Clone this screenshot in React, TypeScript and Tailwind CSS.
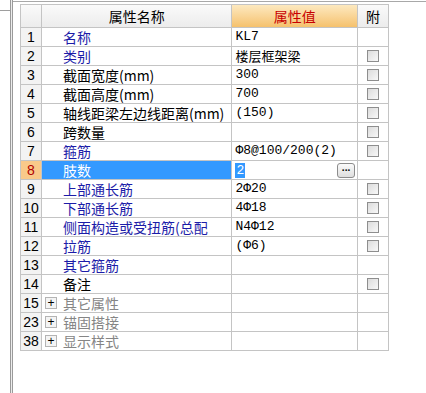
import React from 'react';

type Row = {
    no: string;
    name: string;
    value?: string;
    tone: 'blue' | 'black' | 'group';
    check?: boolean;
    selected?: boolean;
};

const rows: Row[] = [
    { no: '1', name: '名称', value: 'KL7', tone: 'blue' },
    { no: '2', name: '类别', value: '楼层框架梁', tone: 'blue', check: true },
    { no: '3', name: '截面宽度(mm)', value: '300', tone: 'black', check: true },
    { no: '4', name: '截面高度(mm)', value: '700', tone: 'black', check: true },
    { no: '5', name: '轴线距梁左边线距离(mm)', value: '(150)', tone: 'black', check: true },
    { no: '6', name: '跨数量', tone: 'black', check: true },
    { no: '7', name: '箍筋', value: 'Φ8@100/200(2)', tone: 'blue', check: true },
    { no: '8', name: '肢数', value: '2', tone: 'blue', selected: true },
    { no: '9', name: '上部通长筋', value: '2Φ20', tone: 'blue', check: true },
    { no: '10', name: '下部通长筋', value: '4Φ18', tone: 'blue', check: true },
    { no: '11', name: '侧面构造或受扭筋(总配', value: 'N4Φ12', tone: 'blue', check: true },
    { no: '12', name: '拉筋', value: '(Φ6)', tone: 'blue', check: true },
    { no: '13', name: '其它箍筋', tone: 'blue' },
    { no: '14', name: '备注', tone: 'black', check: true },
    { no: '15', name: '其它属性', tone: 'group' },
    { no: '23', name: '锚固搭接', tone: 'group' },
    { no: '38', name: '显示样式', tone: 'group' },
];

const cjk = "font-['Noto_Sans_CJK_SC','Noto_Sans',sans-serif]";
const mono = "font-['Liberation_Mono','Noto_Sans_CJK_SC',monospace]";
const line = 'border-[#c4c4c4]';

function CheckBox() {
    return (
        <div className="h-[12px] w-[12px] border border-[#8e8e8e] bg-gradient-to-br from-[#dcdcdc] to-[#f8f8f8]" />
    );
}

export default function App() {
    return (
        <div className="flex h-[393px] w-[426px] overflow-hidden bg-white">
            {/* left pane edge */}
            <div className="w-[10px] pt-[10px]">
                <div className="border-t border-[#9e9e9e]" />
            </div>
            <div className="w-[3px] border-x border-[#9a9a9a] bg-[#ececec]" />

            <div className="flex-1 pt-[1px]">
                <div className="border-t border-[#a8a8a8] pl-[7px] pt-[2px]">
                    <div className={`w-[369px] border-l border-t ${line} text-[14px] leading-[18px]`}>
                        {/* header */}
                        <div className="flex h-[23px]">
                            <div className={`w-[21px] border-b border-r ${line} bg-gradient-to-b from-[#fafafa] to-[#ececec]`} />
                            <div className={`${cjk} flex w-[191px] items-center justify-center border-b border-r ${line} bg-gradient-to-b from-[#fafafa] to-[#ececec] text-black`}>
                                属性名称
                            </div>
                            <div className={`${cjk} flex w-[126px] items-center justify-center border-b border-r ${line} bg-gradient-to-b from-[#fde9bf] to-[#f5c16c] text-[#c80000]`}>
                                属性值
                            </div>
                            <div className={`${cjk} flex w-[31px] items-center justify-center border-b border-r ${line} bg-gradient-to-b from-[#fafafa] to-[#ececec] text-black`}>
                                附
                            </div>
                        </div>

                        {rows.map((r) => (
                            <div key={r.no} className="flex h-[19px]">
                                <div
                                    className={`flex w-[21px] items-center justify-center border-b border-r ${line} font-['Liberation_Sans',sans-serif] text-[14px] ${
                                        r.selected ? 'bg-[#f9c98a] text-[#b00000]' : 'bg-[#f3f3f3] text-black'
                                    }`}
                                >
                                    {r.no}
                                </div>
                                <div
                                    className={`${cjk} flex w-[191px] items-center overflow-hidden whitespace-nowrap border-b border-r ${line} ${
                                        r.selected ? 'bg-[#3399ff] text-white' : ''
                                    } ${r.tone === 'group' ? 'pl-[3px]' : 'pl-[21px]'} ${
                                        r.tone === 'blue' && !r.selected ? 'text-[#1c1ca8]' : ''
                                    } ${r.tone === 'black' ? 'text-black' : ''} ${r.tone === 'group' ? 'text-[#858585]' : ''}`}
                                >
                                    {r.tone === 'group' && (
                                        <span className="mr-[6px] flex h-[12px] w-[12px] items-center justify-center border border-[#b4b4b4] bg-[#f4f4f4] font-['Liberation_Sans',sans-serif] text-[12px] leading-none text-black">
                                            +
                                        </span>
                                    )}
                                    {r.name}
                                </div>
                                <div className={`flex w-[126px] items-center justify-between overflow-hidden whitespace-nowrap border-b border-r ${line} pl-[3px] pr-[2px] text-black`}>
                                    {r.selected ? (
                                        <>
                                            <span className={`${mono} bg-[#3399ff] px-[1px] text-[13px] leading-[15px] text-white`}>2</span>
                                            <span className="flex h-[15px] w-[18px] items-center justify-center rounded-[3px] border border-[#8c8c8c] bg-gradient-to-b from-[#fbfbfb] to-[#dedede] text-[10px] font-bold leading-none">
                                                ···
                                            </span>
                                        </>
                                    ) : (
                                        <span className={`${/[\u4e00-\u9fff]/.test(r.value ?? '') ? cjk : mono} text-[13px]`}>
                                            {r.value}
                                        </span>
                                    )}
                                </div>
                                <div className={`flex w-[31px] items-center justify-center border-b border-r ${line}`}>
                                    {r.check && <CheckBox />}
                                </div>
                            </div>
                        ))}
                    </div>
                </div>
            </div>
        </div>
    );
}
